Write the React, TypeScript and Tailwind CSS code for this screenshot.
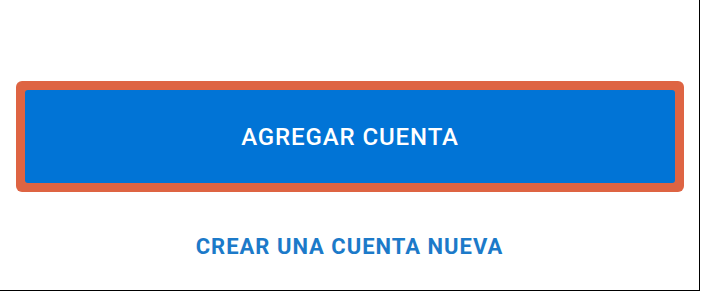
export default function App() {
  return (
    <div className="w-[701px] h-[292px] bg-white" style={{ fontFamily: "Roboto, 'Liberation Sans', sans-serif" }}>
      <div className="w-[700px] h-[291px] border-r border-b border-black flex flex-col">
        <div className="mt-[81px] ml-[16px] w-[668px] h-[111px] rounded-[6px] bg-[#de6443] p-[9px]">
          <div className="w-full h-full rounded-[3px] bg-[#0174d6] flex items-center justify-center">
            <span className="text-white text-[24px] font-medium tracking-[0.9px] leading-none">AGREGAR CUENTA</span>
          </div>
        </div>
        <div className="mt-[44px] flex justify-center">
          <span className="text-[#1c7ac9] text-[22px] font-bold tracking-[1px] leading-none">CREAR UNA CUENTA NUEVA</span>
        </div>
      </div>
    </div>
  );
}
